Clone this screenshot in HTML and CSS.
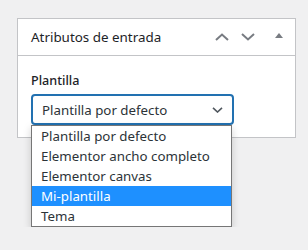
FILE: index.html
```html
<!DOCTYPE html>
<html lang="es">
<head>
    <meta charset="UTF-8">
    <title>Atributos de entrada</title>
    <link rel="stylesheet" href="styles.css">
</head>
<body>
    <div class="postbox">
        <div class="postbox-header">
            <h2>Atributos de entrada</h2>
            <div class="handle-actions">
                <span class="handle up">
                    <svg width="14" height="8" viewBox="0 0 14 8"><path d="M1 7 L7 1.5 L13 7" fill="none" stroke="#787c82" stroke-width="2"/></svg>
                </span>
                <span class="handle down">
                    <svg width="14" height="8" viewBox="0 0 14 8"><path d="M1 1 L7 6.5 L13 1" fill="none" stroke="#787c82" stroke-width="2"/></svg>
                </span>
                <span class="handle toggle">
                    <svg width="8" height="5" viewBox="0 0 8 5"><path d="M0 5 L4 0 L8 5 Z" fill="#787c82"/></svg>
                </span>
            </div>
        </div>
        <div class="inside">
            <p class="label">Plantilla</p>
            <div class="select">
                <span>Plantilla por defecto</span>
                <svg width="11" height="6" viewBox="0 0 11 6"><path d="M1 0.8 L5.5 5 L10 0.8" fill="none" stroke="#50575e" stroke-width="1.6"/></svg>
            </div>
        </div>
    </div>
    <ul class="options">
        <li>Plantilla por defecto</li>
        <li>Elementor ancho completo</li>
        <li>Elementor canvas</li>
        <li class="selected">Mi-plantilla</li>
        <li>Tema</li>
    </ul>
</body>
</html>
```
FILE: styles.css
```css
body {
    margin: 0;
    padding: 18px 12px 0 17px;
    background-color: #f0f0f1;
    font-family: "Noto Sans", "Open Sans", sans-serif;
    color: #1d2327;
    display: grid;
    grid-template-columns: 279px;
    grid-template-rows: 107px 13px auto;
}
.postbox {
    grid-row: 1 / 3;
    grid-column: 1;
    border: 1px solid #c3c4c7;
    background-color: #fff;
}
.postbox-header {
    height: 36px;
    display: flex;
    align-items: center;
    justify-content: space-between;
    border-bottom: 1px solid #c3c4c7;
    padding: 0 12px 0 13px;
}
.postbox-header h2 {
    margin: 0;
    font-size: 13.4px;
    font-weight: 400;
    color: #1d2327;
}
.handle-actions {
    display: flex;
    align-items: center;
}
.handle {
    display: flex;
    align-items: center;
    justify-content: center;
}
.handle.up {
    margin-right: 12px;
}
.handle.down {
    margin-right: 20px;
}
.handle.toggle {
    margin-top: -3px;
}
.inside {
    padding: 16px 12px 0 13px;
}
.label {
    margin: 0 0 4px 0;
    font-size: 12.6px;
    font-weight: 500;
    line-height: 18px;
    color: #1d2327;
}
.select {
    width: 181px;
    height: 27px;
    border: 2px solid #2271b1;
    border-radius: 4px;
    display: flex;
    align-items: center;
    justify-content: space-between;
    padding: 0 9px 0 9px;
    font-size: 13.3px;
    color: #2c3338;
}
.options {
    grid-row: 2 / 4;
    grid-column: 1;
    z-index: 1;
    width: 199px;
    margin: 0 0 0 14px;
    padding: 0;
    list-style: none;
    background-color: #fff;
    border: 1px solid #767676;
    box-shadow: 0 3px 8px rgba(0, 0, 0, 0.18);
    font-size: 13.3px;
    color: #2c3338;
}
.options li {
    height: 20px;
    line-height: 20px;
    padding-left: 9px;
}
.options li.selected {
    background-color: #1e90ff;
    color: #fff;
}
```
